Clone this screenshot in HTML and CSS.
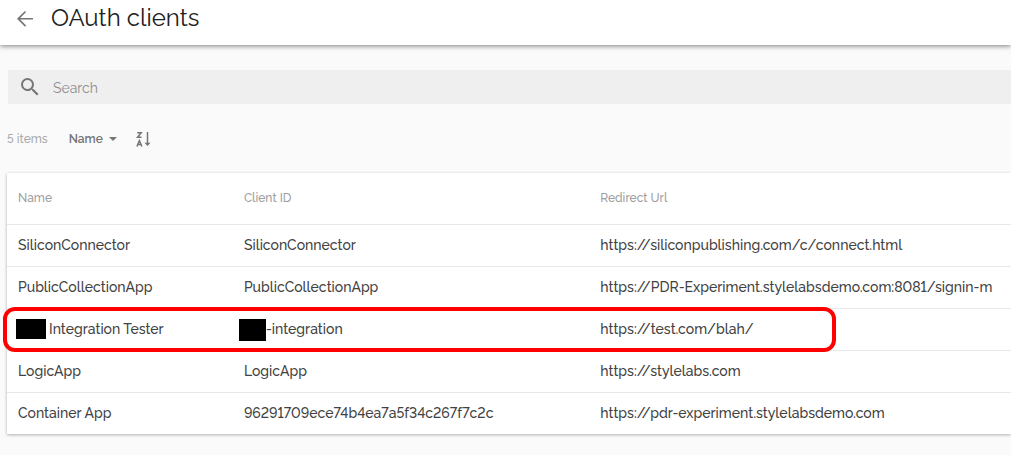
FILE: index.html
```html
<!DOCTYPE html>
<html lang="en">
<head>
<meta charset="utf-8">
<meta name="viewport" content="width=device-width, initial-scale=1">
<title>OAuth clients</title>
<link rel="stylesheet" href="styles.css">
</head>
<body>
<header class="topbar">
  <button class="icon-button" type="button" aria-label="Back">
    <svg width="24" height="24" viewBox="0 0 24 24" fill="#757575"><path d="M20 12H7.2l5.9-5.9L12 4.9 4 12.8l8 7.9 1.1-1.1-5.9-6H20z"/></svg>
  </button>
  <h1 class="title">OAuth clients</h1>
</header>
<main class="content">
  <label class="search">
    <svg width="24" height="24" viewBox="0 0 24 24" fill="#757575" aria-hidden="true"><path d="M15.5 14h-.79l-.28-.27A6.47 6.47 0 0 0 16 9.5 6.5 6.5 0 1 0 9.5 16c1.61 0 3.09-.59 4.23-1.57l.27.28v.79l5 4.99L20.49 19l-4.99-5zm-6 0a4.5 4.5 0 1 1 0-9 4.5 4.5 0 0 1 0 9z"/></svg>
    <input class="search-input" type="text" placeholder="Search" aria-label="Search">
  </label>
  <div class="toolbar">
    <span class="count">5 items</span>
    <button class="sort-field" type="button">Name
      <svg width="8" height="4" viewBox="0 0 8 4" fill="#757575" aria-hidden="true"><path d="M0 0h8L4 4z"/></svg>
    </button>
    <button class="icon-button" type="button" aria-label="Sort descending">
      <svg width="16" height="16" viewBox="0 0 16 16" fill="none" stroke="#757575" stroke-width="1.5"><path d="M1.2 1.7h4L1.5 6.3h4"/><path d="M.9 15.5 3.4 9.6l2.5 5.9M1.8 13.6h3.2"/><path d="M11.5 1v11"/><path d="M8.5 11.7h6l-3 3.3z" fill="#757575" stroke="none"/></svg>
    </button>
  </div>
  <table class="clients">
    <thead>
      <tr><th scope="col">Name</th><th scope="col">Client ID</th><th scope="col">Redirect Url</th></tr>
    </thead>
    <tbody>
      <tr><td>SiliconConnector</td><td>SiliconConnector</td><td>https://siliconpublishing.com/c/connect.html</td></tr>
      <tr><td>PublicCollectionApp</td><td>PublicCollectionApp</td><td>https://PDR-Experiment.stylelabsdemo.com:8081/signin-m</td></tr>
      <tr class="marked"><td><span class="redacted redacted-name"></span>Integration Tester</td><td><span class="redacted redacted-id"></span>-integration</td><td>https://test.com/blah/</td></tr>
      <tr><td>LogicApp</td><td>LogicApp</td><td>https://stylelabs.com</td></tr>
      <tr><td>Container App</td><td>96291709ece74b4ea7a5f34c267f7c2c</td><td>https://pdr-experiment.stylelabsdemo.com</td></tr>
    </tbody>
  </table>
</main>
</body>
</html>
```
FILE: styles.css
```css
* { box-sizing: border-box; }
body {
  margin: 0;
  background: #fafafa;
  color: #424242;
  font-family: Raleway, Lato, sans-serif;
  font-size: 14px;
  line-height: 20px;
  font-variant-numeric: lining-nums;
}
button {
  border: 0;
  padding: 0;
  background: none;
  font: inherit;
  color: inherit;
  cursor: pointer;
}
svg { display: block; }
.topbar {
  display: flex;
  align-items: center;
  gap: 14px;
  padding: 2px 13px 11px;
  background: #fff;
  box-shadow: 0 1px 5px rgba(0, 0, 0, .5);
}
.title {
  margin: 0;
  font-size: 24px;
  line-height: 32px;
  font-weight: 400;
  color: #212121;
}
.content { padding: 25px 0 20px 7px; }
.search {
  display: flex;
  align-items: center;
  gap: 11px;
  height: 34px;
  margin-left: 1px;
  padding-left: 10px;
  background: #efefef;
}
.search-input {
  flex: 1;
  min-width: 0;
  border: 0;
  padding: 2px 0 0;
  outline: 0;
  background: none;
  font: inherit;
}
.search-input::placeholder { color: #8e8e8e; opacity: 1; }
.toolbar {
  display: flex;
  align-items: center;
  padding: 25px 0 24px;
  font-size: 12px;
  font-weight: 500;
}
.count { margin-right: 21px; color: #aaa; }
.sort-field {
  display: flex;
  align-items: center;
  gap: 6px;
  margin-right: 19px;
  color: #757575;
  font-weight: 600;
}
.clients {
  display: block;
  background: #fff;
  box-shadow: 0 1px 3px rgba(0, 0, 0, .3);
}
.clients thead,
.clients tbody { display: block; }
.clients tr {
  display: grid;
  grid-template-columns: 22.5% 35.5% 42%;
  align-items: center;
  height: 42px;
  border-top: 1px solid #e8e8e8;
}
.clients thead tr {
  height: 51px;
  border-top: 0;
}
.clients th {
  padding: 0 0 1px 11px;
  text-align: left;
  font-size: 12px;
  font-weight: 500;
  color: #9e9e9e;
}
.clients td {
  padding: 0 0 2px 11px;
  font-weight: 500;
  white-space: nowrap;
}
.clients .marked { position: relative; }
.marked::after {
  content: "";
  position: absolute;
  inset: -2px 17.4% -2px -4px;
  border: 4px solid #f00;
  border-radius: 12px;
  pointer-events: none;
}
.redacted {
  display: inline-block;
  vertical-align: top;
  background: #000;
}
.redacted-name { width: 30px; height: 20px; margin: 0 3px 0 -2px; }
.redacted-id { width: 27px; height: 22px; margin: 0 0 -2px -5px; }
```
